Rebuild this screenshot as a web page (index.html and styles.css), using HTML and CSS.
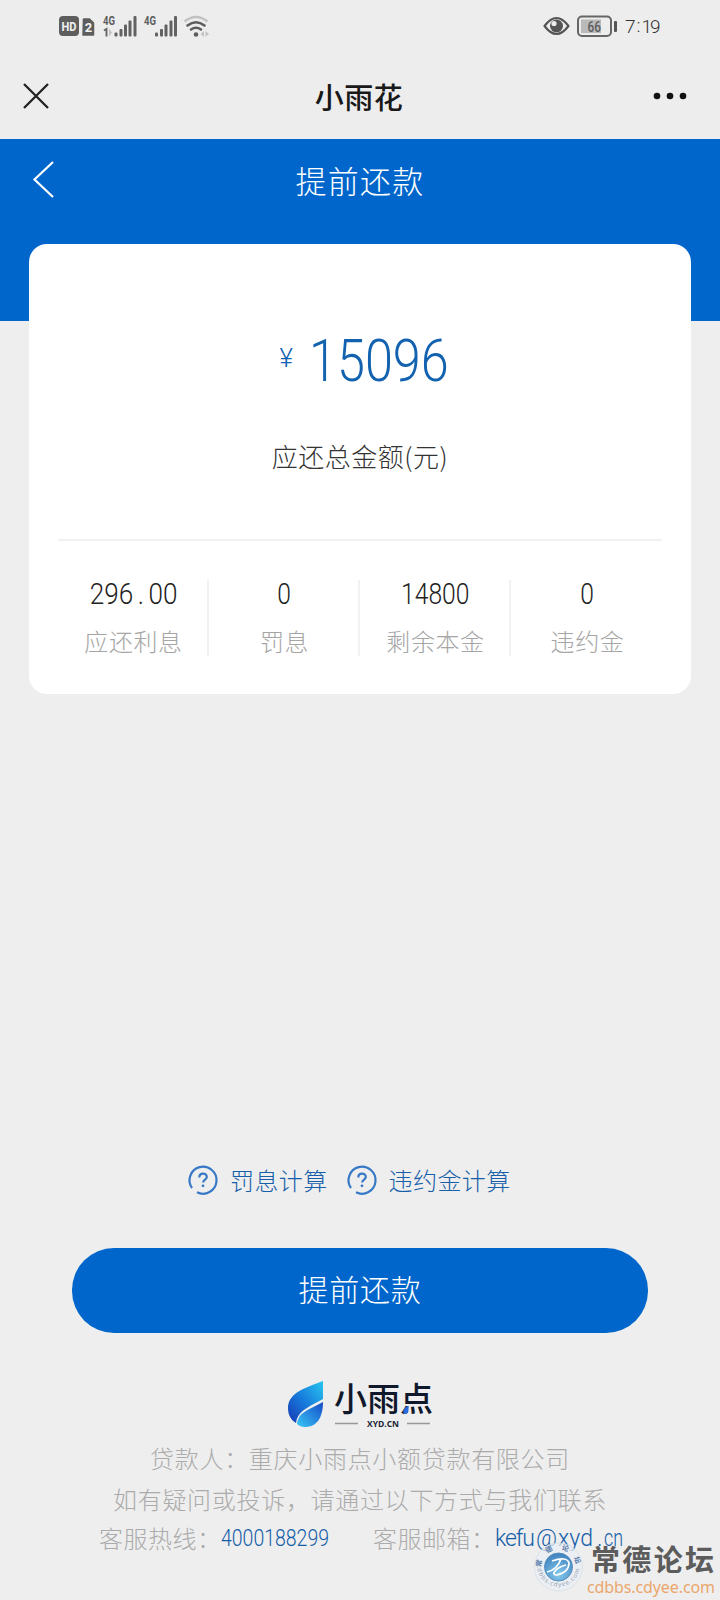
FILE: index.html
```html
<!DOCTYPE html>
<html lang="zh-CN">
<head>
<meta charset="utf-8">
<title>小雨花</title>
<link rel="stylesheet" href="styles.css">
</head>
<body>
<div class="screen">
  <header class="status">
    <svg class="status-left" width="152" height="30" viewBox="0 0 152 30">
      <rect x="0" y="5" width="20" height="20" rx="4" fill="#5d5d5d"/>
      <text x="2.500" y="19.500" textLength="15" lengthAdjust="spacingAndGlyphs" class="badge-text">HD</text>
      <path d="M24.500 8h6l4 4v12h-10.500z" fill="#5d5d5d" stroke="#5d5d5d" stroke-width="1.500" stroke-linejoin="round"/>
      <text x="25.700" y="20.500" class="badge-text">2</text>
      <text x="44" y="13.500" textLength="12" lengthAdjust="spacingAndGlyphs" class="net-text">4G</text>
      <path d="M45 19.500l2.500-1.500v7.500" fill="none" stroke="#666" stroke-width="1.900"/>
      <path d="M50 17.500l3 4-3 4z" fill="#c4c4c4"/>
      <g fill="#626262"><rect x="55.500" y="21.500" width="3" height="4" rx="1"/><rect x="60.500" y="18" width="3" height="7.500" rx="1"/><rect x="65" y="13.500" width="3" height="12" rx="1"/><rect x="69.500" y="9.500" width="3" height="16" rx="1"/><rect x="74.500" y="5" width="3" height="20.500" rx="1"/></g>
      <text x="85" y="13.500" textLength="12" lengthAdjust="spacingAndGlyphs" class="net-text">4G</text>
      <g fill="#626262"><rect x="96" y="21.500" width="3" height="4" rx="1"/><rect x="101" y="18" width="3" height="7.500" rx="1"/><rect x="105.500" y="13.500" width="3" height="12" rx="1"/><rect x="110.500" y="9.500" width="3" height="16" rx="1"/><rect x="115" y="5" width="3" height="20.500" rx="1"/></g>
      <path d="M125.500 10.500q11.500-9 23 0" fill="none" stroke="#c2c2c2" stroke-width="2.600"/>
      <path d="M128.500 14.500q8.500-6.500 17 0M132 18.500q5-3.500 10 0" fill="none" stroke="#5d5d5d" stroke-width="2.600" stroke-linecap="round"/>
      <circle cx="137" cy="23.500" r="2.300" fill="#5d5d5d"/>
      <path d="M145 20v6l-3.500-3zM146.500 20v6l3.500-3z" fill="#c4c4c4"/>
    </svg>
    <div class="status-right">
      <svg width="76" height="26" viewBox="0 0 76 26">
        <path d="M1.500 13q12-16 24 0q-12 16-24 0z" fill="none" stroke="#555" stroke-width="2.200" stroke-linejoin="round"/>
        <circle cx="13.500" cy="13" r="6.500" fill="#555"/>
        <circle cx="11" cy="10.500" r="2.600" fill="#ededed"/>
        <rect x="35" y="3.500" width="33" height="19.500" rx="4" fill="none" stroke="#666" stroke-width="2"/>
        <rect x="38" y="6.500" width="20" height="13.500" fill="#bababa"/>
        <text x="44.500" y="18.500" textLength="13.500" lengthAdjust="spacingAndGlyphs" class="battery-text">66</text>
        <rect x="71" y="8" width="3" height="11" rx="1" fill="#555"/>
      </svg>
      <svg width="36" height="26" viewBox="0 0 36 26" class="clock"><text x="0" y="20">7</text><text x="11.500" y="19">:</text><text x="16.500" y="20">1</text><text x="25" y="20">9</text></svg>
    </div>
  </header>

  <nav class="appbar">
    <svg width="28" height="28" viewBox="0 0 28 28"><path d="M2 2l24 24M26 2L2 26" stroke="#222" stroke-width="2.300"/></svg>
    <h1 class="app-title">小雨花</h1>
    <svg class="more" width="34" height="8" viewBox="0 0 34 8" fill="#111"><circle cx="4" cy="4" r="3.300"/><circle cx="17" cy="4" r="3.300"/><circle cx="30" cy="4" r="3.300"/></svg>
  </nav>

  <section class="hero">
    <div class="hero-bar">
      <svg width="22" height="38" viewBox="0 0 22 38"><path d="M20 1L1.500 18.500 20 36" fill="none" stroke="#fff" stroke-width="2.200"/></svg>
      <h2 class="hero-title">提前还款</h2>
    </div>
  </section>

  <main class="card">
    <div class="amount"><span class="yen">¥</span><span class="amount-value">15096</span></div>
    <p class="amount-label">应还总金额(元)</p>
    <div class="stats">
      <div class="stat"><span class="num wide">296<i class="dot">.</i>00</span><span class="label">应还利息</span></div>
      <div class="stat"><span class="num">0</span><span class="label">罚息</span></div>
      <div class="stat"><span class="num">14800</span><span class="label">剩余本金</span></div>
      <div class="stat"><span class="num">0</span><span class="label">违约金</span></div>
    </div>
  </main>

  <div class="help">
    <a class="help-link"><svg width="30" height="30" viewBox="0 0 30 30"><path d="M9 27.300A13.500 13.500 0 1 0 4 23" fill="none" stroke="#3779c6" stroke-width="2.200"/><path d="M11.300 12.500c0-5 7.500-5 7.500-.5 0 2.800-3.600 2.500-3.600 5.500" fill="none" stroke="#3779c6" stroke-width="2.200"/><circle cx="15" cy="20.800" r="1.400" fill="#3779c6"/></svg>罚息计算</a>
    <a class="help-link"><svg width="30" height="30" viewBox="0 0 30 30"><path d="M9 27.300A13.500 13.500 0 1 0 4 23" fill="none" stroke="#3779c6" stroke-width="2.200"/><path d="M11.300 12.500c0-5 7.500-5 7.500-.5 0 2.800-3.600 2.500-3.600 5.500" fill="none" stroke="#3779c6" stroke-width="2.200"/><circle cx="15" cy="20.800" r="1.400" fill="#3779c6"/></svg>违约金计算</a>
  </div>

  <button class="pay">提前还款</button>

  <footer class="footer">
    <svg class="logo" width="146" height="50" viewBox="0 0 146 50">
      <defs>
        <linearGradient id="leaf" x1="1" y1="0" x2="0" y2="1"><stop offset="0" stop-color="#28c6ee"/><stop offset=".5" stop-color="#187ddd"/><stop offset="1" stop-color="#1739b4"/></linearGradient>
        <linearGradient id="drop" x1="0" y1="1" x2="1" y2="0"><stop offset="0" stop-color="#38c8f5"/><stop offset="1" stop-color="#1549c8"/></linearGradient>
      </defs>
      <path d="M35 1C20 7 0 12 0 28c0 7 3 12 8 15 1-11 10-15 27-24z" fill="url(#leaf)"/>
      <path d="M35 22C22 29 12 32 10 40q-1 1-1 4 3 3 8 3c11 0 18-8 18-25z" fill="url(#drop)"/>
      <text x="46" y="31" textLength="99" lengthAdjust="spacingAndGlyphs" class="logo-text">小雨点</text>
      <path d="M115.500 31q0-4 5-5v4q0 4-3 4t-2-3z" fill="#2869db"/>
      <path d="M47 43.500h23M119 43.500h23" stroke="#999" stroke-width="1.500"/>
      <text x="79" y="47" textLength="32" lengthAdjust="spacingAndGlyphs" class="logo-url">XYD.CN</text>
    </svg>
    <p class="foot-line">贷款人：重庆小雨点小额贷款有限公司</p>
    <p class="foot-line second">如有疑问或投诉，请通过以下方式与我们联系</p>
    <div class="contacts">
      <span class="contact">客服热线：</span><svg class="phone" width="110" height="32" viewBox="0 0 110 32"><text x="0" y="25" textLength="108" lengthAdjust="spacingAndGlyphs" class="link">4000188299</text></svg>
      <span class="contact">客服邮箱：</span><svg width="132" height="32" viewBox="0 0 132 32" class="link"><text x="0" y="25" textLength="40" lengthAdjust="spacing">kefu</text><text x="41" y="25" textLength="21" lengthAdjust="spacingAndGlyphs">@</text><text x="63" y="25" textLength="35" lengthAdjust="spacing">xyd</text><text x="102" y="25">.</text><text x="109" y="25" textLength="19" lengthAdjust="spacingAndGlyphs">cn</text></svg>
    </div>
  </footer>

  <svg class="watermark" width="190" height="60" viewBox="530 1540 190 60">
    <defs>
      <radialGradient id="globe" cx=".5" cy=".75" r=".7"><stop offset="0" stop-color="#86cbed"/><stop offset="1" stop-color="#4385bf"/></radialGradient>
      <path id="arc-top" d="M541 1567a17.500 17.500 0 0 1 35 0"/>
      <path id="arc-bottom" d="M537 1565a21.500 21.500 0 0 0 43 0"/>
    </defs>
    <circle cx="558.500" cy="1567" r="24" fill="#e9edf3" fill-opacity=".75" stroke="#d5dce5" stroke-width=".7"/>
    <circle cx="558.500" cy="1567" r="14" fill="url(#globe)" stroke="#5790bf"/>
    <path d="M552 1561q15-5 17 2 0 9-12 12-5 0-2-4t11-6M547 1572q10-2 14-13" fill="none" stroke="#fff" stroke-width="1.700"/>
    <text class="ring-name"><textPath href="#arc-top" textLength="52">常德论坛</textPath></text>
    <text class="ring-url"><textPath href="#arc-bottom" textLength="63">cdbbs.cdyee.com</textPath></text>
    <text x="591" y="1571" textLength="123" class="mark-name">常德论坛</text>
    <text x="587" y="1593" textLength="128" class="mark-url">cdbbs.cdyee.com</text>
  </svg>
</div>
</body>
</html>
```
FILE: styles.css
```css
* { box-sizing: border-box; }
body { margin: 0; background: #eee; }
h1, h2, p { margin: 0; font-weight: 300; }
svg { overflow: visible; flex: none; }

.screen {
  position: relative;
  width: 720px;
  height: 1600px;
  overflow: hidden;
  background: #eee;
  font-family: "KaiTi", "STKaiti", "Noto Sans CJK SC", sans-serif;
  font-weight: 300;
}

.status {
  height: 56px;
  padding: 11px 58px 0 59px;
  display: flex;
  justify-content: space-between;
  background: #ededed;
}
.status-right { display: flex; gap: 6px; padding-top: 1px; width: 119px; }
.status-right svg { margin-top: 1px; }
.badge-text { font: 700 13px Roboto, sans-serif; fill: #f2f2f2; }
.net-text { font: 700 12px Roboto, sans-serif; fill: #5d5d5d; }
.battery-text { font: 500 15px Roboto, sans-serif; fill: #5d5d5d; }
.clock { font: 300 19px Roboto, sans-serif; fill: #333; }

.appbar {
  height: 83px;
  padding: 0 33px 4px 22px;
  display: grid;
  grid-template-columns: 88px 1fr 79px;
  align-items: center;
  background: #ededed;
}
.app-title {
  font-size: 29px;
  font-weight: 500;
  line-height: 42px;
  text-align: center;
  color: #181818;
  letter-spacing: .5px;
}
.more { justify-self: end; }

.hero { height: 182px; background: #0066cb; }
.hero-bar {
  height: 82px;
  padding: 0 33px;
  display: grid;
  grid-template-columns: 60px 1fr 60px;
  align-items: center;
}
.hero-title {
  font-size: 31px;
  letter-spacing: 1.3px;
  line-height: 44px;
  text-align: center;
  color: #fff;
}

.card {
  position: relative;
  height: 450px;
  margin: -77px 29px 0;
  padding: 81px 29px 0;
  border-radius: 18px;
  background: #fff;
}
.amount {
  height: 70px;
  display: flex;
  justify-content: center;
  font-family: Roboto, sans-serif;
  color: #1262b0;
}
.yen { width: 29px; font-size: 26px; line-height: 66px; margin-left: 17px; }
.amount-value {
  width: 149px;
  font-size: 60px;
  line-height: 71px;
  transform: scaleX(.84);
  transform-origin: 0 50%;
}
.amount-label {
  margin-top: 41px;
  font-size: 26px;
  letter-spacing: .5px;
  line-height: 40px;
  text-align: center;
  color: #333;
}
.stats {
  margin-top: 63px;
  padding-top: 39px;
  border-top: 2px solid #f1f1f1;
  display: grid;
  grid-template-columns: repeat(4, 1fr);
}
.stat {
  height: 76px;
  padding-left: 2px;
  display: flex;
  flex-direction: column;
  align-items: center;
  border-right: 2px solid #f2f2f2;
}
.stat:last-child { border-right: 0; }
.num {
  margin-top: -1px;
  font: 300 29px/30px Roboto, sans-serif;
  color: #222;
  transform: scaleX(.85);
}
.num.wide { transform: scaleX(.9); }
.dot { display: inline-block; width: 17px; text-align: center; font-style: normal; }
.label { margin-top: 15px; font-size: 24px; line-height: 34px; letter-spacing: .6px; color: #a5a5a5; }

.help {
  margin-top: 464px;
  height: 44px;
  padding-left: 188px;
  display: flex;
  align-items: center;
  gap: 19px;
}
.help-link {
  display: flex;
  align-items: center;
  height: 36px;
  gap: 12px;
  font-size: 24px;
  letter-spacing: .4px;
  line-height: 34px;
  color: #185fa9;
}

.pay {
  display: block;
  width: 576px;
  height: 85px;
  margin: 46px auto 0;
  padding: 0 0 5px;
  border: 0;
  border-radius: 42px;
  background: #0066cb;
  color: #fff;
  font: inherit;
  font-size: 30px;
  letter-spacing: .7px;
}

.footer { margin-top: 47px; color: #ababab; }
.logo { display: block; margin-left: 288px; }
.logo-text { font: 500 33px "Noto Sans CJK SC", sans-serif; fill: #10182c; }
.logo-url { font: 700 9px "Open Sans", sans-serif; fill: #202536; }
.foot-line { margin-top: 9px; font-size: 24px; letter-spacing: .7px; line-height: 38px; text-align: center; }
.foot-line.second { margin-top: 3px; }
.contacts { display: flex; height: 38px; align-items: center; padding-left: 99px; }
.contact { width: 122px; font-size: 24px; letter-spacing: .5px; white-space: nowrap; }
.phone { margin-right: 42px; }
.link { font: 300 23px Roboto, sans-serif; fill: #145da8; }

/* Forum stamp lies over the bottom right corner of the page. */
.watermark { position: absolute; right: 0; bottom: 0; }
.ring-name { font: 700 7px "Noto Sans CJK SC", sans-serif; fill: #567aab; }
.ring-url { font: 6px "Noto Sans", sans-serif; fill: #91a1b8; }
.mark-name { font: 700 29px "KaiTi", "Noto Sans CJK SC", sans-serif; fill: #5c5c5c; }
.mark-url { font: 16px "Noto Sans", sans-serif; fill: #eba66c; }
```
